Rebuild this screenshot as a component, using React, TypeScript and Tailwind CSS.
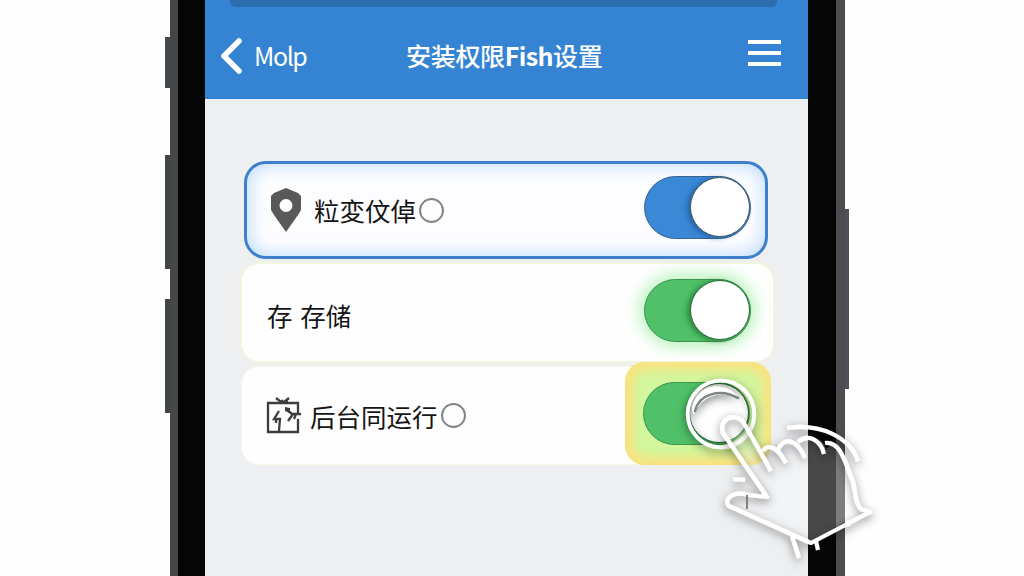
import React from 'react';
import { clsx } from 'clsx';

interface SwitchProps {
  color: 'blue' | 'green';
  className?: string;
}

const Switch: React.FC<SwitchProps> = ({ color, className }) => (
  <div
    className={clsx(
      'flex h-[63px] w-[107px] shrink-0 items-center justify-end rounded-full border',
      color === 'blue' ? 'border-[#3a6690] bg-[#3a88d6]' : 'border-[#3f9150] bg-[#50c168]',
      className,
    )}
  >
    <div
      className={clsx(
        'h-[60px] w-[60px] rounded-full border-[1.5px] bg-white',
        color === 'blue'
          ? 'border-[#45596b] shadow-[-3px_1px_5px_rgba(15,55,105,0.45)]'
          : 'border-[#246b35] shadow-[-3px_1px_5px_rgba(10,80,25,0.5)]',
      )}
    />
  </div>
);

const PinIcon = () => (
  <svg className="h-[44px] w-[30px]" viewBox="0 0 30 44">
    <path d="M15 0L27 5L30 8V22L27 27L15 44L3 27L0 22V8L3 5Z" fill="#595959" />
    <circle cx="15" cy="17.5" r="6.5" fill="#fff" />
  </svg>
);

const TaskIcon = () => (
  <svg className="h-[37px] w-[36px]" viewBox="0 0 36 37" fill="none" stroke="#3c3d3f" strokeWidth="2.3">
    <path d="M32 17V6H2V35H32V22" />
    <path d="M10 1L15 5L17 3M18 5L23 1M13 5H22" />
    <path d="M13 14L8 22H14L13 34M10 22V26" />
    <path d="M20 12L26 17H35M27 17L22 24M30 17L28 22" />
    <path d="M19 10L24 11V16L19 14Z" fill="#3c3d3f" stroke="none" />
  </svg>
);

// Tap pointer: ring on the knob, translucent hand with a white outline
const TapHand = () => (
  <svg
    className="pointer-events-none absolute top-[370px] left-[670px] h-[206px] w-[220px]"
    viewBox="670 370 220 206"
    fill="none"
    stroke="#fff"
    strokeLinecap="round"
    strokeLinejoin="round"
  >
    <defs>
      <filter id="handShadow" x="-20%" y="-20%" width="140%" height="140%">
        <feDropShadow dx="0" dy="3" stdDeviation="5" floodColor="#000" floodOpacity="0.5" />
      </filter>
    </defs>
    <g filter="url(#handShadow)">
      <circle cx="721" cy="414" r="33.3" strokeWidth="3.8" />
      <path d="M692 410C695 385 723 379 738 397C720 390 701 396 694 414Z" fill="#fff" stroke="none" />
    </g>
    <path d="M695 411C699 394 720 388 738 398" stroke="#7d8683" strokeWidth="2.6" />
    <path
      d="M722 434C718 420 735 411 744 422L763 451C767 443 777 446 779 451C783 437 798 438 803 447C808 434 824 437 826 449C836 439 841 452 848 467C855 482 852 499 863 510L811 543L732 507C719 498 732 489 741 493L765 496Z"
      fill="#fff"
      fillOpacity="0.27"
      stroke="none"
    />
    <g filter="url(#handShadow)" strokeWidth="4.2" strokeLinecap="butt">
      <path d="M771 471L744 423C735 411 718 419 723 433L767 497L749 495C736 490 722 498 729 506L811 543L870 512L861 509C853 501 857 489 851 477C844 458 839 441 825 443" />
      <path d="M763 451C767 443 778 447 786 463M778 450C783 437 797 438 805 458M798 442C807 434 820 438 824 454" />
      <path d="M787 428C820 423 850 437 858 461" />
      <path d="M733 479L745 480M792 536L799 558M816 541L818 550M847 521L849 526" />
    </g>
    <path d="M747 495V509" stroke="#777" strokeWidth="1.8" strokeLinecap="butt" />
  </svg>
);

const Ring = () => <span className="h-[25px] w-[25px] rounded-full border-2 border-[#858585]" />;

export default function App() {
  return (
    <div className="relative flex h-[576px] w-[1024px] overflow-hidden bg-[#fefefe] pl-[165px] font-['Noto_Sans_CJK_SC',sans-serif] text-[#151515]">
      {/* Left hardware buttons */}
      <div className="w-[5px] shrink-0 pt-[37px]">
        <div className="h-[51px] bg-[#45484a]" />
        <div className="mt-[67px] h-[114px] bg-[#414546]" />
        <div className="mt-[30px] h-[114px] bg-[#414546]" />
      </div>

      <div className="flex h-full w-[675px] shrink-0 border-r-[9px] border-l-[8px] border-r-[#4c4d4e] border-l-[#454647] bg-[#050505] pr-[28px] pl-[27px]">
        <div className="flex w-full flex-col bg-[#eeeff1]">
          <header className="h-[99px] shrink-0 bg-[#3584d3]">
            <div className="ml-[25px] h-[7px] w-[547px] rounded-b-md bg-[#2b6dae]" />
            <div className="flex h-[98px] items-center pr-[27px] pl-[15px] text-white">
              <svg className="h-[38px] w-[22px]" viewBox="0 0 22 38" fill="none" stroke="#fff" strokeWidth="5.5" strokeLinecap="round" strokeLinejoin="round">
                <path d="M19 4L4 19L19 34" />
              </svg>
              <span className="ml-[12px] w-[152px] text-[25px] tracking-[-1.4px]">Molp</span>
              <h1 className="text-[25px] font-medium tracking-[-0.3px] whitespace-nowrap">
                安装权限<span className="font-bold tracking-[-0.6px]">Fish</span>设置
              </h1>
              <div className="mb-[6px] ml-auto space-y-[7px]">
                <div className="h-1 w-[33px] bg-white" />
                <div className="h-1 w-[33px] bg-white" />
                <div className="h-1 w-[33px] bg-white" />
              </div>
            </div>
          </header>

          <main className="flex flex-col pt-[62px] pl-[36px]">
            <section className="ml-[3px] flex h-[98px] w-[524px] items-center rounded-[22px] border-[3px] border-[#3c80cb] bg-[#fdfdff] pr-[14px] pl-[24px] shadow-[inset_0_0_20px_#b4d5fa]">
              <PinIcon />
              <span className="mr-[3px] ml-[13px] text-[25.5px] whitespace-nowrap">粒変伩倬</span>
              <Ring />
              <Switch color="blue" className="mb-[6px] ml-auto" />
            </section>

            <section className="mt-[4px] flex h-[99px] w-[533px] items-center rounded-[18px] border border-[#f2f6d8] bg-[#fefefe] pr-[22px] pl-[25px] shadow-[0_0_4px_#f2f5da]">
              <span className="pt-[5px] text-[25.5px] [word-spacing:2px]">存 存储</span>
              <Switch color="green" className="mb-[5px] ml-auto shadow-[0_0_16px_4px_#b3f2b6]" />
            </section>

            <section className="mt-[4px] flex h-[99px] w-[530px] items-center rounded-[18px] border border-[#f6f8e6] bg-[#fefefe] pl-[24px]">
              <TaskIcon />
              <span className="mr-[3px] ml-[8px] pt-[2px] text-[25.5px] whitespace-nowrap">后台同运行</span>
              <Ring />
              <div className="-mr-px mb-[5px] ml-auto flex h-[103px] w-[146px] items-center rounded-[20px] bg-[#d3f79d] pl-[18px] shadow-[inset_0_0_12px_7px_#ffdf7c]">
                <Switch color="green" />
              </div>
            </section>
          </main>
        </div>
      </div>

      {/* Right hardware button */}
      <div className="h-[389px] w-1 shrink-0 pt-[209px]">
        <div className="h-[180px] bg-[#505158]" />
      </div>

      <TapHand />
    </div>
  );
}
